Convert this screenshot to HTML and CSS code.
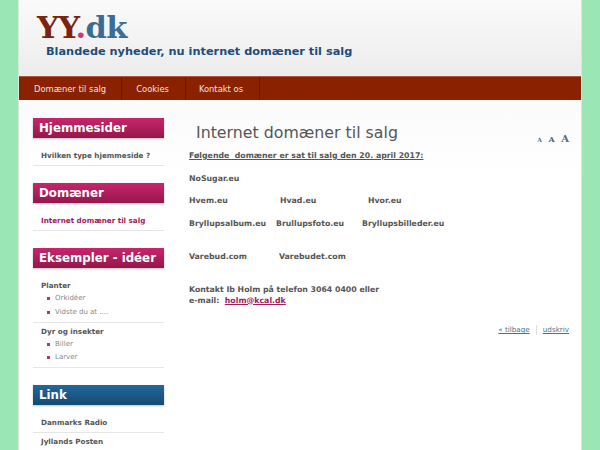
FILE: index.html
```html
<!DOCTYPE html>
<html lang="da">
<head>
    <meta charset="UTF-8">
    <title>Internet domæner til salg - YY.dk</title>
    <link rel="stylesheet" href="styles.css">
</head>
<body>
    <div class="page">
        <div class="header">
            <div class="logo"><span class="yy">YY</span><span class="dot">.</span><span class="dk">dk</span></div>
            <div class="slogan">Blandede nyheder, nu internet domæner til salg</div>
        </div>
        <ul class="nav">
            <li><a href="#">Domæner til salg</a></li>
            <li><a href="#">Cookies</a></li>
            <li><a href="#">Kontakt os</a></li>
        </ul>
        <div class="main">
            <div class="sidebar">
                <div class="box">
                    <h3 class="pink">Hjemmesider</h3>
                    <ul class="menu">
                        <li><a href="#">Hvilken type hjemmeside ?</a></li>
                    </ul>
                </div>
                <div class="box">
                    <h3 class="pink">Domæner</h3>
                    <ul class="menu">
                        <li><a href="#" class="active">Internet domæner til salg</a></li>
                    </ul>
                </div>
                <div class="box">
                    <h3 class="pink">Eksempler - idéer</h3>
                    <ul class="menu">
                        <li><a href="#">Planter</a>
                            <ul class="sub">
                                <li><a href="#">Orkidéer</a></li>
                                <li><a href="#">Vidste du at ....</a></li>
                            </ul>
                        </li>
                        <li><a href="#">Dyr og insekter</a>
                            <ul class="sub">
                                <li><a href="#">Biller</a></li>
                                <li><a href="#">Larver</a></li>
                            </ul>
                        </li>
                    </ul>
                </div>
                <div class="box">
                    <h3 class="blue">Link</h3>
                    <ul class="menu">
                        <li><a href="#">Danmarks Radio</a></li>
                        <li><a href="#">Jyllands Posten</a></li>
                    </ul>
                </div>
            </div>
            <div class="content">
                <div class="title-row">
                    <h1>Internet domæner til salg</h1>
                    <div class="fontsize">
                        <a href="#" class="small">A</a>
                        <a href="#" class="medium">A</a>
                        <a href="#" class="large">A</a>
                    </div>
                </div>
                <p class="intro"><u>Følgende&nbsp; domæner er sat til salg den 20. april 2017:</u></p>
                <p>NoSugar.eu</p>
                <p class="row"><span class="c1">Hvem.eu</span><span class="c2">Hvad.eu</span><span>Hvor.eu</span></p>
                <p class="row"><span class="b1">Bryllupsalbum.eu</span><span class="b2">Brullupsfoto.eu</span><span>Bryllupsbilleder.eu</span></p>
                <p class="row spaced"><span class="v1">Varebud.com</span><span>Varebudet.com</span></p>
                <p class="contact">Kontakt Ib Holm på telefon 3064 0400 eller<br>e-mail:&nbsp; <a href="#">holm@kcal.dk</a></p>
                <div class="pagelinks">
                    <a href="#">« tilbage</a>
                    <span class="sep"></span>
                    <a href="#">udskriv</a>
                </div>
            </div>
        </div>
    </div>
</body>
</html>
```

FILE: styles.css
```css
* {
    box-sizing: border-box;
    margin: 0;
    padding: 0;
}

body {
    background-color: #9ae6b4;
    font-family: "DejaVu Sans", Verdana, sans-serif;
    color: #555;
}

.page {
    width: 564px;
    height: 450px;
    overflow: hidden;
    margin: 0 auto;
    background: linear-gradient(#f6f6f6, #ffffff 180px);
    border-left: 1px solid #d8e8dc;
    border-right: 1px solid #d8e8dc;
}

.header {
    height: 76px;
    background: linear-gradient(#fafafa, #ececec);
    padding: 10px 0 0 18px;
}

.logo {
    font-family: "DejaVu Serif", Georgia, serif;
    font-weight: bold;
    font-size: 30.5px;
    line-height: 34px;
    letter-spacing: -0.6px;
}

.logo .yy { color: #7a2410; }
.logo .dot { color: #c8387a; }
.logo .dk { color: #3a6c98; }

.slogan {
    font-weight: bold;
    font-size: 11.3px;
    color: #1f4d78;
    margin: 1px 0 0 9px;
}

.nav {
    list-style: none;
    display: flex;
    height: 24px;
    background-color: #8a2100;
    border-top: 1px solid #b2553a;
}

.nav li {
    border-right: 1px solid #6a1800;
}

.nav a {
    display: block;
    padding: 0 15px 0 15px;
    line-height: 23px;
    font-family: "DejaVu Sans Condensed", "Liberation Sans", sans-serif;
    font-size: 9.3px;
    color: #f4e2dc;
    text-decoration: none;
}

.nav li:nth-child(2) a { padding: 0 16px 0 14px; }
.nav li:nth-child(3) a { padding: 0 16px 0 13px; }

.main {
    display: flex;
    padding: 18px 12px 0 14px;
}

.sidebar {
    width: 131px;
    flex-shrink: 0;
}

.box {
    margin-bottom: 17px;
}

.box h3 {
    height: 20px;
    line-height: 20px;
    padding-left: 6px;
    font-size: 11.8px;
    color: #fff;
    white-space: nowrap;
    box-shadow: 0 1px 2px rgba(0, 0, 0, 0.25);
}

.box h3.pink {
    background: linear-gradient(#c8266a, #94174c);
}

.box h3.blue {
    background: linear-gradient(#22689a, #154a74);
}

.menu {
    list-style: none;
    padding-top: 9px;
}

.menu > li {
    border-bottom: 1px solid #e6e6e6;
    padding: 3px 0 3px 8px;
    font-size: 7.2px;
    line-height: 12px;
}

.menu > li + li {
    padding-top: 3px;
}

.menu a {
    font-weight: bold;
    color: #555;
    text-decoration: none;
}

.menu a.active {
    color: #a3205c;
}

.sub {
    list-style: none;
    padding: 0 0 0 6px;
}

.sub li {
    position: relative;
    padding-left: 8px;
    font-size: 7px;
    line-height: 13.5px;
    height: 13.5px;
}

.sub li:last-child {
    height: 13px;
}

.sub li::before {
    content: "";
    position: absolute;
    left: 0;
    top: 5px;
    width: 3px;
    height: 3px;
    background-color: #b03870;
}

.sub a {
    font-weight: normal;
    color: #888;
}

.content {
    flex: 1;
    padding-left: 25px;
}

.title-row {
    display: flex;
    justify-content: space-between;
    align-items: flex-end;
    padding: 5px 0 0 7px;
}

.content h1 {
    font-weight: normal;
    font-size: 15.8px;
    color: #555;
}

.fontsize {
    font-family: "DejaVu Serif", Georgia, serif;
    font-weight: bold;
    margin-bottom: -4px;
}

.fontsize a {
    color: #4a6a88;
    text-decoration: none;
    margin-left: 1px;
}

.fontsize .small { font-size: 6px; }
.fontsize .medium { font-size: 8px; }
.fontsize .large { font-size: 10px; }

.content p {
    font-size: 7.8px;
    font-weight: bold;
    color: #555;
    margin-top: 12.5px;
    line-height: 10px;
}

.content p.intro {
    margin-top: 9px;
}

.row span {
    display: inline-block;
}

.c1 { width: 91px; }
.c2 { width: 88px; }
.b1 { width: 87px; }
.b2 { width: 86px; }
.v1 { width: 90px; }

.content p.spaced {
    margin-top: 23px;
}

.content p.contact {
    margin-top: 22px;
    line-height: 11px;
}

.contact a {
    color: #a3205c;
}

.pagelinks {
    display: flex;
    justify-content: flex-end;
    align-items: center;
    margin-top: 19px;
    font-size: 7.2px;
}

.pagelinks a {
    color: #4a7290;
}

.pagelinks .sep {
    width: 1px;
    height: 10px;
    background-color: #ddd;
    margin: 0 6px;
}
```
